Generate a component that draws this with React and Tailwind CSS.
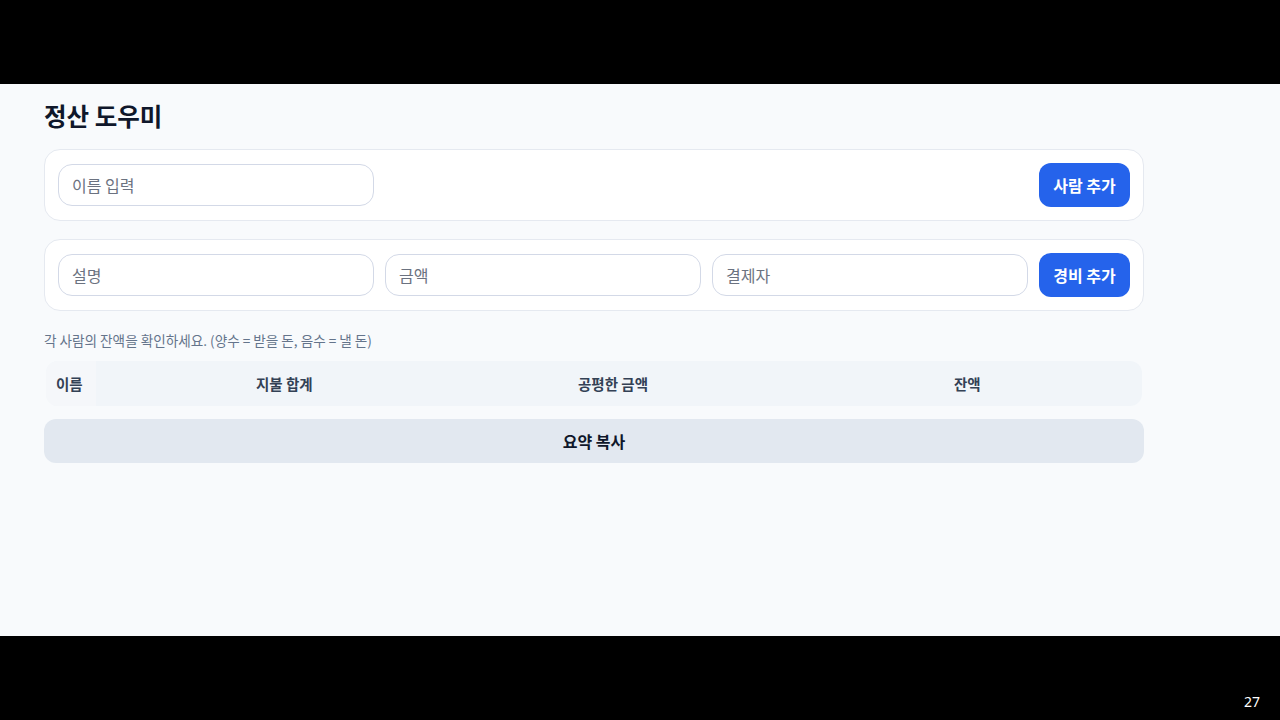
import React, { useState } from "react";

const font = { fontFamily: '"Noto Sans CJK KR", "Noto Sans", sans-serif' };

const Field = ({ placeholder, className = "" }) => (
  <input
    placeholder={placeholder}
    className={`h-[42px] rounded-[14px] border border-[#d3d9e7] bg-white px-[13px] text-[16px] text-slate-800 placeholder:text-[#6b7280] outline-none ${className}`}
  />
);

const App = () => {
  const [people] = useState([]);

  return (
    <div className="w-[1280px] h-[720px] bg-black flex flex-col" style={font}>
      <div className="h-[84px]" />
      <div className="h-[552px] bg-[#f8fafc] px-[44px] pt-[16px]">
        <div className="w-[1100px]">
          <h1 className="text-[24.5px] leading-[32px] font-bold text-[#0f172a] mb-[17px]">정산 도우미</h1>

          {/* 사람 추가 */}
          <div className="flex items-center justify-between h-[72px] px-[13px] bg-white border border-[#e5e9f0] rounded-[16px] mb-[18px]">
            <Field placeholder="이름 입력" className="w-[316px]" />
            <button className="h-[44px] w-[91px] rounded-[12px] bg-[#2563eb] text-white text-[16px] font-bold">
              사람 추가
            </button>
          </div>

          {/* 경비 추가 */}
          <div className="flex items-center gap-[11px] h-[72px] px-[13px] bg-white border border-[#e5e9f0] rounded-[16px]">
            <Field placeholder="설명" className="flex-1 min-w-0" />
            <Field placeholder="금액" className="flex-1 min-w-0" />
            <Field placeholder="결제자" className="flex-1 min-w-0" />
            <button className="h-[44px] w-[91px] shrink-0 rounded-[12px] bg-[#2563eb] text-white text-[16px] font-bold">
              경비 추가
            </button>
          </div>

          <p className="mt-[19px] text-[13.6px] leading-[20px] text-[#64748b]">
            각 사람의 잔액을 확인하세요. (양수 = 받을 돈, 음수 = 낼 돈)
          </p>

          <div className="mt-[11px] px-[2px]">
            <div className="grid grid-cols-[50px_426px_288px_1fr] h-[45px] rounded-[12px] bg-[#f1f5f9] overflow-hidden text-[14.5px] font-bold text-[#334155]">
              <div className="flex items-center pl-[10px] bg-[#f5f7fa]">이름</div>
              <div className="flex items-center pl-[160px]">지불 합계</div>
              <div className="flex items-center pl-[56px]">공평한 금액</div>
              <div className="flex items-center pl-[144px]">잔액</div>
            </div>
            {people.map((p) => (
              <div key={p}>{p}</div>
            ))}
          </div>

          <button className="mt-[13px] w-full h-[44px] rounded-[12px] bg-[#e2e8f0] text-[16px] font-bold text-[#0f172a]">
            요약 복사
          </button>
        </div>
      </div>
      <div className="h-[84px] relative">
        <span className="absolute right-[20px] top-[55px] text-[14px] text-white" style={{ fontFamily: '"Noto Sans", sans-serif' }}>
          27
        </span>
      </div>
    </div>
  );
};

export default App;
